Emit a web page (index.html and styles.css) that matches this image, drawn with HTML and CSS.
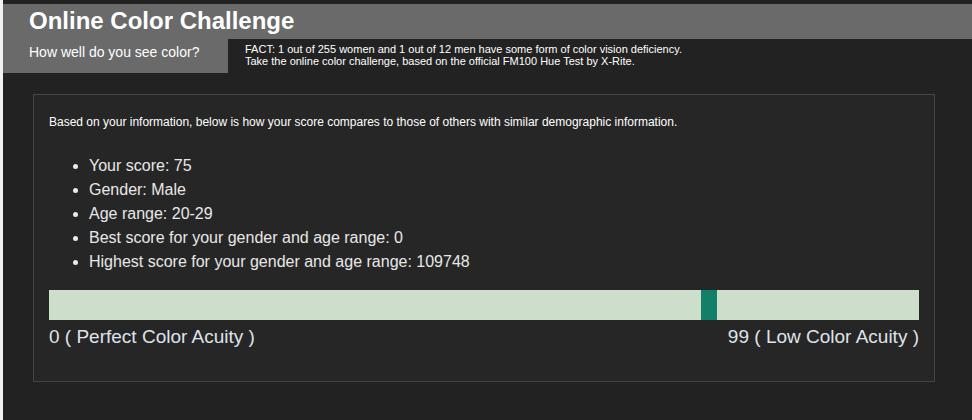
FILE: index.html
```html
<!doctype html>
<html lang="en">
<head>
    <meta charset="UTF-8">
    <title>Online Color Challenge</title>
    <link rel="stylesheet" href="styles.css">
</head>
<body>

<div class="page">
    <div class="header">
        <h1 class="title">Online Color Challenge</h1>
    </div>

    <div class="sub">
        <div class="sub-tab">How well do you see color?</div>
        <div class="fact">
            FACT: 1 out of 255 women and 1 out of 12 men have some form of color vision deficiency.<br>
            Take the online color challenge, based on the official FM100 Hue Test by X-Rite.
        </div>
    </div>

    <div class="panel">
        <p class="intro">Based on your information, below is how your score compares to those of others with similar demographic information.</p>

        <ul class="stats">
            <li>Your score: 75</li>
            <li>Gender: Male</li>
            <li>Age range: 20-29</li>
            <li>Best score for your gender and age range: 0</li>
            <li>Highest score for your gender and age range: 109748</li>
        </ul>

        <div class="scale">
            <div class="scale-mark" style="left: 74.9%"></div>
        </div>
        <div class="scale-labels">
            <span>0 ( Perfect Color Acuity )</span>
            <span>99 ( Low Color Acuity )</span>
        </div>
    </div>
</div>

</body>
</html>
```

FILE: styles.css
```css
body {
    margin: 0;
    background: #f3f2ee;
    font-family: "Liberation Sans", Arial, sans-serif;
}

.page {
    margin-left: 3px;
    min-height: 100vh;
    padding-top: 4px;
    box-sizing: border-box;
    background: #222;
    overflow: hidden;
}

.header {
    height: 35px;
    padding-left: 26px;
    background: #6a6a6a;
}

.title {
    margin: 0;
    font-size: 24px;
    line-height: 33px;
    font-weight: bold;
    color: #fff;
}

.sub {
    display: flex;
    height: 34px;
}

.sub-tab {
    width: 199px;
    padding: 5px 0 0 26px;
    font-size: 14px;
    line-height: 17px;
    color: #fff;
    background: #6a6a6a;
}

.fact {
    padding: 4px 0 0 17px;
    font-size: 11px;
    line-height: 12px;
    color: #fff;
}

.panel {
    width: 870px;
    margin: 21px 0 0 30px;
    padding: 20px 15px 33px 15px;
    border: 1px solid #444;
    background: #262626;
}

.intro {
    margin: 0;
    font-size: 12px;
    line-height: 14px;
    color: #fff;
}

.stats {
    margin: 25px 0 16px;
    padding-left: 40px;
    font-size: 16px;
    line-height: 24px;
    color: #e8e8e8;
}

.scale {
    position: relative;
    height: 30px;
    background: #cddfcb;
}

.scale-mark {
    position: absolute;
    top: 0;
    width: 16px;
    height: 30px;
    background: #137f68;
}

.scale-labels {
    display: flex;
    justify-content: space-between;
    margin-top: 6px;
    font-size: 19px;
    line-height: 22px;
    color: #dfe3ea;
}
```
